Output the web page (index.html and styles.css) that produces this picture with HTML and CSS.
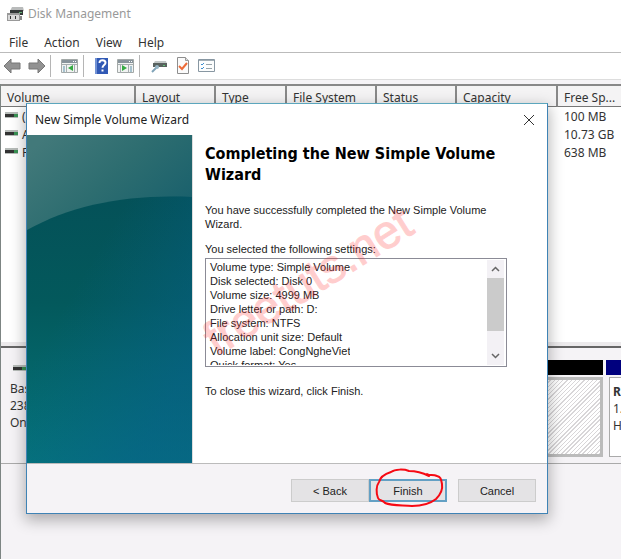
FILE: index.html
```html
<!DOCTYPE html>
<html lang="en">
<head>
<meta charset="utf-8">
<title>Disk Management</title>
<link rel="stylesheet" href="styles.css">
</head>
<body>
<div class="app">
  <header class="titlebar">
    <svg class="app-icon" width="18" height="17" viewBox="0 0 18 17" aria-hidden="true">
      <path d="M5 1h11l1 4H3z" fill="#b9bbbb"/>
      <path d="M3 4h13v5H3z" fill="#343838"/>
      <path d="M12 6h3v1h-3z" fill="#5fae72"/>
      <path d="M0 7h13v8H0z" fill="#999"/>
      <path d="M1 9h11v5H1z" fill="#d9d9d9"/>
      <path d="M3 10h1v3H3zM8 10h1v3H8z" fill="#333"/>
      <path d="M13 10h2v4h-2z" fill="#888"/>
    </svg>
    <span>Disk Management</span>
  </header>
  <nav class="menubar">
    <button>File</button><button>Action</button><button>View</button><button>Help</button>
  </nav>
  <div class="toolbar">
    <button aria-label="Back"><svg width="18" height="16" viewBox="0 0 18 16"><path d="M1 8l7-7v4h9v6H8v4z" fill="#929292" stroke="#777"/></svg></button>
    <button aria-label="Forward"><svg width="18" height="16" viewBox="0 0 18 16"><path d="M17 8l-7-7v4H1v6h9v4z" fill="#929292" stroke="#777"/></svg></button>
    <i class="rule"></i>
    <button aria-label="Show console tree"><svg width="18" height="16" viewBox="0 0 18 16"><path d="M.5 1.500h16v13H.5z" fill="#f1f3f2" stroke="#a3a9a8"/><path d="M1 2h15v3H1z" fill="#87939b"/><path d="M12 3h1v1h-1zM14 3h1v1h-1z" fill="#fff"/><path d="M5.500 6v9M13.500 6v9M1 6.500h15" stroke="#a5adb0"/><path d="M2 9h2M2 11h2M2 13h2" stroke="#5d91ac"/><path d="M12 7v6l-5-3z" fill="#35aa43"/></svg></button>
    <i class="rule"></i>
    <button aria-label="Help"><svg width="16" height="18" viewBox="0 0 16 18"><path d="M1 1h13v16H1z" fill="#3159b5"/><path d="M1 1h2v16H1z" fill="#7292d4"/><path d="M5.500 6c0-4 6-3.500 6-.3 0 2.300-3 2.300-3 5" fill="none" stroke="#fff" stroke-width="2"/><path d="M7.500 12.500h2v2h-2z" fill="#fff"/></svg></button>
    <button aria-label="Show action pane"><svg width="18" height="16" viewBox="0 0 18 16"><path d="M.5 1.500h16v13H.5z" fill="#f1f3f2" stroke="#a3a9a8"/><path d="M1 2h15v3H1z" fill="#87939b"/><path d="M12 3h1v1h-1zM14 3h1v1h-1z" fill="#fff"/><path d="M3.500 6v9M11.500 6v9M1 6.500h15" stroke="#a5adb0"/><path d="M13 9h2M13 11h2M13 13h2" stroke="#5d91ac"/><path d="M5 7v6l5-3z" fill="#35aa43"/></svg></button>
    <i class="rule"></i>
    <button class="spaced" aria-label="Connect"><svg width="18" height="16" viewBox="0 0 18 16"><path d="M5 3h11l1 3H3z" fill="#c1c6c6"/><path d="M3 5h14v4H3z" fill="#59625f"/><path d="M13 7h2v1h-2z" fill="#62c577"/><path d="M7 9l-5 5" stroke="#80a3b8" stroke-width="2"/><circle cx="7" cy="9" r="2" fill="#96b5c5"/></svg></button>
    <button class="spaced" aria-label="Check disk"><svg width="14" height="18" viewBox="0 0 14 18"><path d="M1.500.5h8l3 3v13h-11z" fill="#fbfbfb" stroke="#8e8e8e"/><path d="M9.500.5v3h3" fill="#ddd" stroke="#999"/><path d="M3 9l3 3 5-6" fill="none" stroke="#ed6b38" stroke-width="2"/></svg></button>
    <button class="spaced" aria-label="Properties"><svg width="18" height="14" viewBox="0 0 18 14"><path d="M.5.5h16v12H.5z" fill="#fcfdfd" stroke="#8897a2"/><path d="M1 1h15v1H1z" fill="#a2aeb6"/><path d="M3 5l1 1 2-2M3 9l1 1 2-2" fill="none" stroke="#3d8ed0"/><path d="M8 5.500h6M8 9.500h6" stroke="#98a4aa"/></svg></button>
  </div>

  <main class="panes">
    <section class="volumes">
      <table>
        <colgroup><col class="c-volume"><col class="c-layout"><col class="c-type"><col class="c-fs"><col class="c-status"><col class="c-capacity"><col></colgroup>
        <thead><tr><th>Volume</th><th>Layout</th><th>Type</th><th>File System</th><th>Status</th><th>Capacity</th><th>Free Sp...</th></tr></thead>
        <tbody>
          <tr><td><i class="drive"></i>(</td><td></td><td></td><td></td><td></td><td></td><td>100 MB</td></tr>
          <tr><td><i class="drive"></i>A</td><td></td><td></td><td></td><td></td><td></td><td>10.73 GB</td></tr>
          <tr><td><i class="drive"></i>F</td><td></td><td></td><td></td><td></td><td></td><td>638 MB</td></tr>
        </tbody>
      </table>
    </section>
    <section class="disk">
      <div class="disk-label"><i class="drive"></i><span>Bas</span><span>238</span><span>On</span></div>
      <div class="partition"><div class="stripe"></div><div class="hatched"></div></div>
      <div class="partition"><div class="stripe navy"></div><div class="part-info"><b>R</b><span>1.</span><span>H</span></div></div>
    </section>
  </main>
</div>

<div class="dialog" role="dialog" aria-labelledby="wizard-title">
  <div class="dialog-title">
    <span id="wizard-title">New Simple Volume Wizard</span>
    <button aria-label="Close"><svg width="12" height="12" viewBox="0 0 12 12"><path d="M1 1l10 10M11 1L1 11" stroke="#333"/></svg></button>
  </div>
  <div class="dialog-body">
    <svg class="banner" viewBox="0 0 165 328" preserveAspectRatio="none" aria-hidden="true">
      <defs>
        <linearGradient id="sky" gradientUnits="userSpaceOnUse" x1="20" y1="0" x2="120" y2="110"><stop offset="0" stop-color="#42797a"/><stop offset=".5" stop-color="#2d6d70"/><stop offset="1" stop-color="#19606c"/></linearGradient>
        <linearGradient id="hill" x1="0" y1="0" x2="0" y2="1"><stop offset="0" stop-color="#045158"/><stop offset=".4" stop-color="#03595c"/><stop offset="1" stop-color="#05747a"/></linearGradient>
        <linearGradient id="edge" gradientUnits="userSpaceOnUse" x1="50" y1="150" x2="170" y2="220"><stop offset="0" stop-color="#07608a" stop-opacity="0"/><stop offset="1" stop-color="#07608a" stop-opacity=".6"/></linearGradient>
      </defs>
      <path d="M0 0h165v328H0z" fill="url(#sky)"/>
      <path d="M0 95C45 70 100 59 165 62v266H0z" fill="url(#hill)"/>
      <path d="M0 95C45 70 100 59 165 62v266H0z" fill="url(#edge)"/>
    </svg>
    <div class="content">
      <h1>Completing the New Simple Volume Wizard</h1>
      <p>You have successfully completed the New Simple Volume Wizard.</p>
      <p class="caption">You selected the following settings:</p>
      <div class="settings">
        <ul>
          <li>Volume type: Simple Volume</li>
          <li>Disk selected: Disk 0</li>
          <li>Volume size: 4999 MB</li>
          <li>Drive letter or path: D:</li>
          <li>File system: NTFS</li>
          <li>Allocation unit size: Default</li>
          <li>Volume label: CongNgheViet</li>
          <li>Quick format: Yes</li>
        </ul>
        <div class="scrollbar">
          <svg width="9" height="6" viewBox="0 0 9 6"><path d="M1 5l3.500-3.500L8 5" fill="none" stroke="#666" stroke-width="1.500"/></svg>
          <div class="thumb"></div>
          <svg width="9" height="6" viewBox="0 0 9 6"><path d="M1 1l3.500 3.500L8 1" fill="none" stroke="#666" stroke-width="1.500"/></svg>
        </div>
      </div>
      <p class="closing">To close this wizard, click Finish.</p>
    </div>
    <span class="watermark">freetuts.net</span>
  </div>
  <footer class="actions">
    <button>&lt; Back</button>
    <button class="primary">Finish
      <svg class="ring" width="70" height="40" viewBox="0 0 70 40" aria-hidden="true"><path d="M54 8C48 5 41 3 34 3 29 1 20 1 16 4 10 6 5 9 4 14 1 18 1 25 3 30c1 3 5 2 7 5 7 3 18 2 27 3 10 0 19-3 24-7 5-5 7-9 6-15-1-5-1-7-5-8-4-2-7 0-10-2" fill="none" stroke="#f60a14" stroke-width="2" stroke-linecap="round" stroke-linejoin="round"/></svg>
    </button>
    <button class="cancel">Cancel</button>
  </footer>
</div>
</body>
</html>
```
FILE: styles.css
```css
* { box-sizing: border-box; }

body {
  margin: 0;
  background: #f5f3f6;
  color: #333;
  font: 12px/18px "Noto Sans", "Open Sans", sans-serif;
  overflow: hidden;
}

button {
  border: 0;
  padding: 0;
  background: none;
  color: inherit;
  font: inherit;
}

svg { display: block; }

.app {
  display: flex;
  flex-direction: column;
  min-height: 100vh;
}

.titlebar {
  display: flex;
  align-items: center;
  gap: 3px;
  height: 28px;
  padding-left: 7px;
  background: #fff;
  color: #999;
}

.menubar {
  display: flex;
  gap: 16px;
  height: 25px;
  padding: 5px 9px 0;
  background: #fff;
  border-bottom: 1px solid #bbb;
}

.toolbar {
  display: flex;
  align-items: center;
  gap: 4px;
  height: 27px;
  padding-left: 3px;
  background: #fff;
  border-bottom: 1px solid #ddd;
}

.rule {
  width: 1px;
  height: 22px;
  background: #b5b5b5;
}

.toolbar .rule + button { margin-left: 6px; }
.toolbar button + button { margin-left: 3px; }
.toolbar .spaced + .spaced { margin-left: 4px; }

.panes {
  flex: 1;
  margin-top: 4px;
  border-left: 1px solid #7d8583;
}

.volumes {
  height: 264px;
  background: #fff;
  border-top: 2px solid #888;
  border-bottom: 2px solid #666;
  box-shadow: inset 0 -4px #eceaec;
}

table {
  width: 100%;
  table-layout: fixed;
  border-collapse: separate;
  border-spacing: 0;
}

.c-volume { width: 135px; }
.c-layout { width: 80px; }
.c-type { width: 71px; }
.c-fs { width: 90px; }
.c-status { width: 80px; }
.c-capacity { width: 101px; }

th, td {
  padding: 0 0 0 6px;
  text-align: left;
  font-weight: 400;
  white-space: nowrap;
}

th {
  height: 21px;
  padding-top: 3px;
  line-height: 17px;
  background: #f4f3f4;
  border-right: 2px solid #888;
  border-bottom: 1px solid #777;
}

th:last-child { border-right: 0; }

td {
  height: 18px;
  padding-top: 2px;
  line-height: 16px;
}

td:first-child { padding-left: 4px; }

.drive {
  display: inline-block;
  width: 13px;
  height: 6px;
  margin-right: 4px;
  vertical-align: 3px;
  background: linear-gradient(90deg, #333 70%, #399254 70%) 0 2px / 100% 3px no-repeat, #b7bcb9;
}

.disk {
  display: grid;
  grid-template-columns: 103px 1fr 15px;
  column-gap: 3px;
  height: 116px;
  padding-top: 12px;
  border-bottom: 1px solid #aaa;
  overflow: hidden;
}

.disk-label {
  display: flex;
  flex-direction: column;
  padding-left: 9px;
  line-height: 17px;
}

.disk-label .drive { margin: 5px 0 9px 3px; flex: none; }

.partition {
  display: flex;
  flex-direction: column;
  gap: 2px;
  overflow: hidden;
}

.stripe {
  height: 15px;
  background: #000;
}

.stripe.navy { background: #00007e; }

.hatched {
  height: 80px;
  border: 3px solid #bbb;
  background: repeating-linear-gradient(135deg, #fff 0 2px, #d8d6d8 2px 3px);
}

.part-info {
  display: flex;
  flex-direction: column;
  height: 80px;
  margin-left: 3px;
  padding: 5px 0 0 3px;
  border: solid #aaa;
  border-width: 1px 0 1px 1px;
  background: #fff;
  line-height: 17px;
}

.dialog {
  position: absolute;
  top: 103px;
  left: 26px;
  right: 73px;
  background: #fff;
  border: 1px solid #3f83b5;
  border-top-color: #5ba6bd;
  box-shadow: 0 5px 14px 1px rgba(0, 0, 0, .3);
}

.dialog-title {
  display: flex;
  justify-content: space-between;
  align-items: center;
  height: 31px;
  padding: 0 12px 0 8px;
  color: #222;
}

.dialog-body {
  display: flex;
  position: relative;
  min-height: 328px;
  color: #222;
  font: 11px/14px "Liberation Sans", Arial, sans-serif;
}

.banner {
  flex: none;
  width: 165px;
  height: 328px;
}

.content {
  flex: 1;
  padding: 8px 40px 0 12px;
  border-left: 1px solid #ddd;
}

h1 {
  margin: 0 0 18px;
  color: #000;
  font: 700 16px/21px "DejaVu Sans Condensed", "Noto Sans", sans-serif;
}

p { margin: 0; }
.caption { margin-top: 11px; }
.closing { margin-top: 17px; }

.settings {
  display: flex;
  justify-content: space-between;
  height: 109px;
  margin-top: 2px;
  padding: 1px 2px;
  border: 1px solid #8b8b96;
}

ul {
  margin: 0;
  padding: 0 0 0 2px;
  list-style: none;
  overflow: hidden;
}

.scrollbar {
  display: flex;
  flex-direction: column;
  align-items: center;
  width: 17px;
  padding: 6px 0;
  background: #f3f1f5;
}

.thumb {
  width: 17px;
  height: 53px;
  margin: 6px 0 auto;
  background: #cbcbcb;
}

.watermark {
  position: absolute;
  top: 122px;
  left: 163px;
  color: #f22;
  -webkit-text-stroke: 1px #f22;
  font-size: 47px;
  line-height: 47px;
  opacity: .22;
  transform: rotate(-32deg);
  pointer-events: none;
}

.actions {
  display: flex;
  justify-content: flex-end;
  height: 50px;
  padding: 15px 11px 0;
  border-top: 1px solid #bbb;
  background: #f5f3f6;
  color: #222;
  font: 11px/14px "Liberation Sans", Arial, sans-serif;
}

.actions button {
  width: 78px;
  height: 23px;
  border: 1px solid #ccc;
  background: #e4e3e5;
}

.actions .primary {
  position: relative;
  border: 2px solid #63a0c4;
}

.actions .cancel { margin-left: 11px; }

.ring {
  position: absolute;
  top: -13px;
  left: 4px;
  overflow: visible;
}
```
